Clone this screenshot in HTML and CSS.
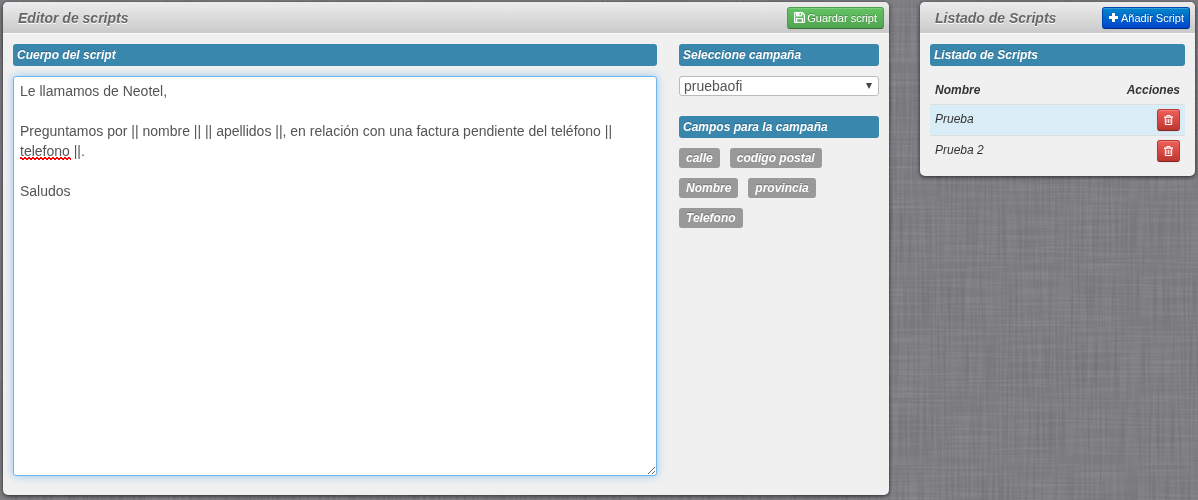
FILE: index.html
```html
<!DOCTYPE html>
<html lang="es">
<head>
  <meta charset="UTF-8">
  <meta name="viewport" content="width=device-width, initial-scale=1.0">
  <title>Editor de scripts</title>
  <link rel="stylesheet" href="styles.css">
</head>
<body>
  <svg class="texture" aria-hidden="true">
    <filter id="threads-x" x="0" y="0" width="100%" height="100%">
      <feTurbulence type="fractalNoise" baseFrequency="0.015 0.45" numOctaves="1" seed="3"/>
      <feColorMatrix values="0 0 0 0 1  0 0 0 0 1  0 0 0 0 1  0.8 0 0 0 -0.3"/>
    </filter>
    <filter id="threads-y" x="0" y="0" width="100%" height="100%">
      <feTurbulence type="fractalNoise" baseFrequency="0.45 0.015" numOctaves="1" seed="8"/>
      <feColorMatrix values="0 0 0 0 0  0 0 0 0 0  0 0 0 0 0  0.8 0 0 0 -0.3"/>
    </filter>
    <rect width="100%" height="100%" filter="url(#threads-x)"/>
    <rect width="100%" height="100%" filter="url(#threads-y)"/>
  </svg>

  <div class="page">
    <section class="panel">
      <header class="panel-header">
        <h1>Editor de scripts</h1>
        <button type="button" class="btn btn-success">
          <svg class="icon" viewBox="0 0 11 11" aria-hidden="true">
            <path fill-rule="evenodd" d="M1 0h7.500L11 2.500V10a1 1 0 0 1-1 1H1a1 1 0 0 1-1-1V1a1 1 0 0 1 1-1zM1.300 1.200v8.600H2V6h7v3.800h.8V3.200L8.200 1.500V4.500H2V1.200zM5.500 1.200v2H7v-2zM3.200 7.300v2.500h4.600V7.300z"/>
          </svg>
          Guardar script
        </button>
      </header>
      <div class="panel-body editor">
        <div class="editor-main">
          <h2 class="bar"><label for="cuerpo">Cuerpo del script</label></h2>
          <div class="textarea-wrap">
            <textarea id="cuerpo" spellcheck="false">Le llamamos de Neotel,

Preguntamos por || nombre || || apellidos ||, en relación con una factura pendiente del teléfono || telefono ||.

Saludos</textarea>
            <span class="misspelled"></span>
          </div>
        </div>
        <div class="editor-side">
          <h2 class="bar"><label for="campana">Seleccione campaña</label></h2>
          <div class="select-wrap">
            <select id="campana">
              <option>pruebaofi</option>
            </select>
          </div>
          <h2 class="bar">Campos para la campaña</h2>
          <div class="tags">
            <button type="button" class="tag">calle</button>
            <button type="button" class="tag">codigo postal</button>
            <button type="button" class="tag">Nombre</button>
            <button type="button" class="tag">provincia</button>
            <button type="button" class="tag">Telefono</button>
          </div>
        </div>
      </div>
    </section>

    <section class="panel">
      <header class="panel-header">
        <h1>Listado de Scripts</h1>
        <button type="button" class="btn btn-primary">
          <svg class="icon" viewBox="0 0 11 11" aria-hidden="true">
            <path d="M4.500 1h2q.5 0 .5.500V4h2.500q.5 0 .5.500v2q0 .5-.5.500H7v2.500q0 .5-.5.500h-2q-.5 0-.5-.5V7H1.500Q1 7 1 6.500v-2Q1 4 1.500 4H4V1.500Q4 1 4.500 1z"/>
          </svg>
          Añadir Script
        </button>
      </header>
      <div class="panel-body">
        <h2 class="bar">Listado de Scripts</h2>
        <table class="scripts">
          <thead>
            <tr><th>Nombre</th><th>Acciones</th></tr>
          </thead>
          <tbody>
            <tr class="info">
              <td>Prueba</td>
              <td>
                <button type="button" class="btn btn-danger" aria-label="Eliminar Prueba">
                  <svg class="icon" viewBox="0 0 11 11" aria-hidden="true">
                    <path fill-rule="evenodd" d="M4 0h3l1 1.500h2v1.300h-.8V9a1 1 0 0 1-1 1H2.800a1 1 0 0 1-1-1V2.800H1V1.500h2zM4.500 1l-.3.500h2.600L6.500 1zM2.800 2.800V9h5.400V2.800zM3.500 4h.8v4h-.8zM5.100 4h.8v4h-.8zM6.700 4h.8v4h-.8z"/>
                  </svg>
                </button>
              </td>
            </tr>
            <tr>
              <td>Prueba 2</td>
              <td>
                <button type="button" class="btn btn-danger" aria-label="Eliminar Prueba 2">
                  <svg class="icon" viewBox="0 0 11 11" aria-hidden="true">
                    <path fill-rule="evenodd" d="M4 0h3l1 1.500h2v1.300h-.8V9a1 1 0 0 1-1 1H2.800a1 1 0 0 1-1-1V2.800H1V1.500h2zM4.500 1l-.3.500h2.600L6.500 1zM2.800 2.800V9h5.400V2.800zM3.500 4h.8v4h-.8zM5.100 4h.8v4h-.8zM6.700 4h.8v4h-.8z"/>
                  </svg>
                </button>
              </td>
            </tr>
          </tbody>
        </table>
      </div>
    </section>
  </div>
</body>
</html>
```
FILE: styles.css
```css
* {
  box-sizing: border-box;
}

body {
  margin: 0;
  background: #7f7e83;
  color: #333;
  font-family: "Liberation Sans", Arial, sans-serif;
  font-size: 12px;
  line-height: 20px;
}

h1, h2 {
  margin: 0;
}

button, select, textarea {
  font-family: inherit;
}

.texture {
  position: fixed;
  inset: 0;
  z-index: -1;
  width: 100%;
  height: 100%;
  opacity: 0.25;
}

.page {
  display: grid;
  grid-template-columns: 886fr 275fr;
  gap: 31px;
  align-items: start;
  padding: 2px 3px 5px;
}

.panel {
  background: #f0f0f0;
  border-radius: 5px;
  box-shadow: 0 1px 4px rgba(0, 0, 0, 0.7);
}

.panel-header {
  display: flex;
  justify-content: space-between;
  align-items: center;
  height: 32px;
  padding: 0 5px 0 15px;
  border-bottom: 1px solid #fafafa;
  border-radius: 5px 5px 0 0;
  background: linear-gradient(#ececec, #cacaca);
}

.panel-header h1 {
  color: #666;
  font-size: 14px;
  font-style: italic;
  text-shadow: 0 1px 0 #fff;
}

.panel-body {
  padding: 10px;
}

.editor {
  display: grid;
  grid-template-columns: 644fr 200fr;
  gap: 22px;
  padding-bottom: 19px;
}

.bar {
  margin-bottom: 10px;
  padding: 1px 4px;
  border-radius: 3px;
  background: #3a87ad;
  color: #fff;
  font-size: 12px;
  font-style: italic;
  text-shadow: 0 -1px 0 rgba(0, 0, 0, 0.25);
}

.textarea-wrap {
  position: relative;
}

textarea {
  display: block;
  width: 100%;
  height: 400px;
  padding: 4px 6px;
  border: 1px solid #6fb5ea;
  border-radius: 3px;
  outline: 0;
  background: #fff;
  box-shadow: 0 0 8px rgba(82, 168, 236, 0.6);
  color: #555;
  font-size: 14px;
  line-height: 20px;
}

/* spelling mark under the unknown word */
.misspelled {
  position: absolute;
  top: 81px;
  left: 7px;
  width: 51px;
  height: 3px;
  background:
    linear-gradient(45deg, transparent 40%, #f00 40%, #f00 60%, transparent 60%) 0 0 / 4px 3px,
    linear-gradient(-45deg, transparent 40%, #f00 40%, #f00 60%, transparent 60%) 2px 0 / 4px 3px;
  pointer-events: none;
}

.select-wrap {
  position: relative;
  margin-bottom: 20px;
}

.select-wrap::after {
  content: "";
  position: absolute;
  top: 7px;
  right: 7px;
  border: 3px solid transparent;
  border-top: 6px solid #444;
  border-bottom: 0;
  pointer-events: none;
}

select {
  display: block;
  width: 100%;
  height: 20px;
  padding: 0 4px;
  appearance: none;
  border: 1px solid #bbb;
  border-radius: 3px;
  background: #fff;
  color: #555;
  font-size: 14px;
  line-height: 18px;
}

.tags {
  display: flex;
  flex-wrap: wrap;
  gap: 10px;
}

.tag {
  height: 20px;
  padding: 0 7px;
  border: 0;
  border-radius: 3px;
  background: #999;
  color: #fff;
  font-size: 12px;
  font-style: italic;
  font-weight: bold;
  line-height: 20px;
  text-shadow: 0 -1px 0 rgba(0, 0, 0, 0.25);
}

.btn {
  display: inline-flex;
  align-items: center;
  gap: 2px;
  height: 22px;
  padding: 0 6px;
  border: 1px solid;
  border-radius: 3px;
  box-shadow: inset 0 1px 0 rgba(255, 255, 255, 0.2), 0 1px 2px rgba(0, 0, 0, 0.05);
  color: #fff;
  font-size: 11px;
  text-shadow: 0 -1px 0 rgba(0, 0, 0, 0.25);
}

.btn-success {
  border-color: #48a048 #48a048 #387038;
  background: linear-gradient(#62c462, #51a351);
}

.btn-primary {
  padding: 0 5px;
  border-color: #0044b0 #0044b0 #002a80;
  background: linear-gradient(#0088cc, #0044cc);
}

.btn-danger {
  padding: 0 5px;
  border-color: #bd362f #bd362f #802420;
  background: linear-gradient(#ee5f5b, #bd362f);
}

.icon {
  width: 11px;
  height: 11px;
  fill: #fff;
}

.scripts {
  width: 100%;
  border-collapse: collapse;
  font-style: italic;
}

.scripts th,
.scripts td {
  padding: 4px 5px;
  text-align: left;
  vertical-align: top;
}

.scripts th:last-child,
.scripts td:last-child {
  text-align: right;
}

.scripts td {
  border-top: 1px solid #ddd;
}

.scripts .btn {
  vertical-align: top;
}

.scripts .info {
  background: #d9edf7;
}
```
